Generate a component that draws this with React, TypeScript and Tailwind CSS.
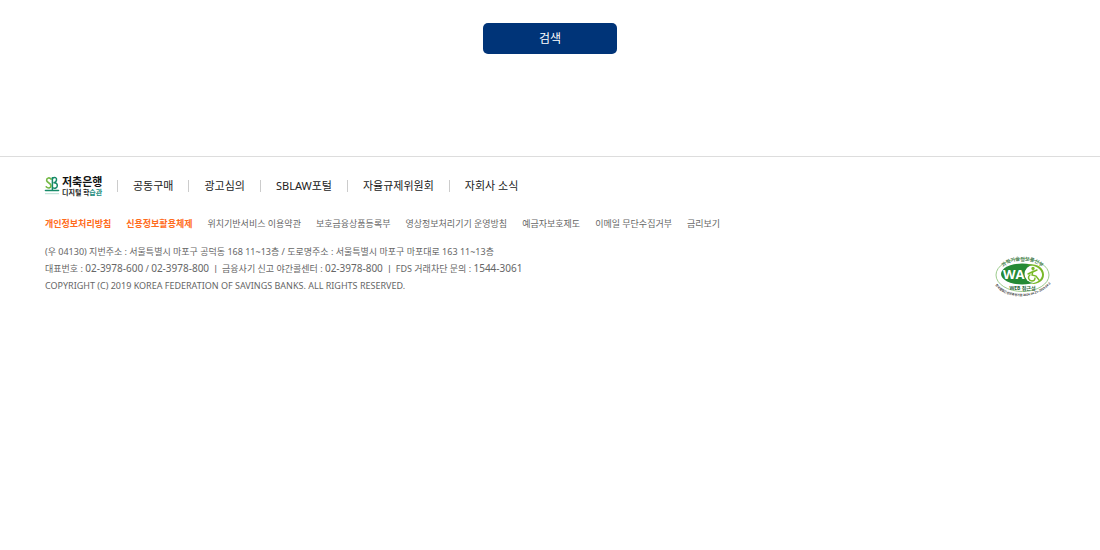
import {ReactNode} from 'react';

interface ILink {
    label: string;
    strong?: boolean;
}

const siteLinks: ILink[] = [
    {label: '공동구매'},
    {label: '광고심의'},
    {label: 'SBLAW포털'},
    {label: '자율규제위원회'},
    {label: '자회사 소식'},
];

const policyLinks: ILink[] = [
    {label: '개인정보처리방침', strong: true},
    {label: '신용정보활용체제', strong: true},
    {label: '위치기반서비스 이용약관'},
    {label: '보호금융상품등록부'},
    {label: '영상정보처리기기 운영방침'},
    {label: '예금자보호제도'},
    {label: '이메일 무단수집거부'},
    {label: '금리보기'},
];

export default function App() {
    return (
        <div className="bg-white font-['Noto_Sans','Noto_Sans_CJK_KR',sans-serif]">
            <main className="flex justify-center pt-[23px] pb-[102px]">
                <button type="button" className="h-[31px] w-[134px] cursor-pointer rounded-[5px] bg-[#003478] text-xs text-white">
                    검색
                </button>
            </main>
            <Footer/>
        </div>
    );
}

const Footer = () => (
    <footer className="border-t border-[#dddddd] px-[45px] pt-[17px]">
        <div className="flex items-center">
            <a href="#" aria-label="저축은행 디지털 학습관">
                <Logo/>
            </a>
            <ul className="flex items-center text-[11px] leading-6 text-[#222222]">
                {siteLinks.map(({label}) => (
                    <li key={label} className="flex items-center">
                        <span className="mr-[15px] ml-[15px] h-3 w-px bg-[#cccccc]"/>
                        <a href="#">{label}</a>
                    </li>
                ))}
            </ul>
        </div>
        <ul className="mt-[18px] flex flex-wrap gap-x-[15px] text-[9px] leading-4 text-[#666666]">
            {policyLinks.map(({label, strong}) => (
                <li key={label}>
                    <a href="#" className={strong ? 'font-bold text-[#ff6c1c]' : ''}>{label}</a>
                </li>
            ))}
        </ul>
        <div className="flex items-start justify-between pt-[11px] pr-[3px]">
            <address className="text-[9px] leading-[17px] text-[#666666] not-italic">
                <p>(우 04130) 지번주소 : 서울특별시 마포구 공덕동 168 11~13층 / 도로명주소 : 서울특별시 마포구 마포대로 163 11~13층</p>
                <p>
                    대표번호 : <Phone>02-3978-600</Phone> / <Phone>02-3978-800</Phone> ㅣ 금융사기 신고 야간콜센터 : <Phone>02-3978-800</Phone> ㅣ FDS 거래차단 문의 : <Phone>1544-3061</Phone>
                </p>
                <p>COPYRIGHT (C) 2019 KOREA FEDERATION OF SAVINGS BANKS. ALL RIGHTS RESERVED.</p>
            </address>
            <a href="#" aria-label="WEB 접근성" className="mt-3">
                <AccessibilityMark/>
            </a>
        </div>
    </footer>
);

const Phone = ({children}: {children: ReactNode}) => <span className="text-[10px]">{children}</span>;

const Logo = () => (
    <svg width="57" height="20" viewBox="0 0 57 20" className="overflow-visible font-['Noto_Sans_CJK_KR',sans-serif] font-bold">
        <g fill="none" strokeLinecap="round">
            <path d="M6 3.2C4.8 1.2 1.6 1.6 1.6 4.2C1.6 6.8 6 6.7 6 9.8C6 12.3 2.8 12.6 1.2 10.8" stroke="#73b843" strokeWidth="1.6"/>
            <path d="M7.4 1.8V14" stroke="#168a68" strokeWidth="1.5"/>
            <path d="M7.4 2.4C9.6 .5 12 1.8 11.5 4.1C11.2 5.7 9.8 6.7 8.4 6.8C11 6.6 12.4 7.8 12.3 9.7C12.2 12 9.8 12.8 8 11.9" stroke="#168a68" strokeWidth="1.5"/>
            <path d="M.5 14.5H13.5" stroke="#168a68" strokeWidth="1.6"/>
            <path d="M.5 17.6H13.5" stroke="#8ccbb8" strokeWidth="1.4" strokeDasharray="1 1" strokeLinecap="butt"/>
        </g>
        <text x="17" y="10" fontSize="11" fill="#111111">저축은행</text>
        <text x="17" y="19" fontSize="7" fill="#222222">디지털 학<tspan fill="#168a7a">습관</tspan></text>
    </svg>
);

const AccessibilityMark = () => (
    <svg width="58" height="42" viewBox="0 0 58 42" className="overflow-visible font-['Open_Sans','Noto_Sans_CJK_KR',sans-serif]">
        <defs>
            <path id="markTop" d="M7 16C13 2 44 2 50 16"/>
            <path id="markBottom" d="M2 31C13 45 43 45 57 28"/>
        </defs>
        <ellipse cx="28.5" cy="20" rx="26.5" ry="16.5" fill="#ffffff" stroke="#9ccb8c" strokeWidth="1"/>
        <ellipse cx="28" cy="19" rx="21" ry="10.5" fill="#258a35"/>
        <ellipse cx="39.5" cy="19" rx="9" ry="9" fill="#ffffff"/>
        <path d="M32 10.5C39 7 50 11 50 19.5C50 27 43 29.5 36 29C44 27.5 48.5 24 48 19C47 13 39 9.5 32 10.5Z" fill="#79b928"/>
        <g fill="none" stroke="#79b928" strokeWidth="1.4" strokeLinecap="round">
            <circle cx="39" cy="13.4" r="1" fill="#79b928"/>
            <path d="M39 16L38 20L42 21L45 25M38.5 17L43 15M38 17L34 19M36 20C33 22 35 26 38 26C40 26 41 25 41 23"/>
        </g>
        <text x="9" y="23.5" fontSize="13" fontWeight="700" fill="#ffffff">WA</text>
        <text fontSize="5" fontWeight="700" fill="#4b8057">
            <textPath href="#markTop" startOffset="50%" textAnchor="middle">과학기술정보통신부</textPath>
        </text>
        <text x="28.5" y="34.5" fontSize="5" fontWeight="700" fill="#286338" textAnchor="middle">WEB 접근성</text>
        <text fontSize="3" fontWeight="700" fill="#333333">
            <textPath href="#markBottom" startOffset="50%" textAnchor="middle">한국웹접근성인증평가원 2024.04.21~2025.04.20</textPath>
        </text>
    </svg>
);
